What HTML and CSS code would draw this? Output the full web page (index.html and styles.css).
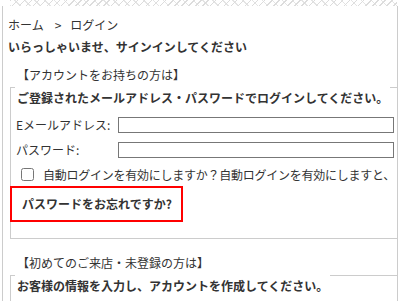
FILE: index.html
```html
<!DOCTYPE html>
<html lang="ja">
<head>
    <meta charset="UTF-8">
    <title>ログイン</title>
    <link rel="stylesheet" href="styles.css">
</head>
<body>
    <div class="top-band"></div>
    <div class="frame">
        <div class="breadcrumb">ホーム<span class="sep">&gt;</span>ログイン</div>
        <div class="welcome">いらっしゃいませ、サインインしてください</div>

        <!-- 会員ログイン -->
        <fieldset class="box box-login">
            <legend>
                <span class="legend-title">【アカウントをお持ちの方は】</span>
                <span class="legend-lead">ご登録されたメールアドレス・パスワードでログインしてください。</span>
            </legend>
            <div class="field-row">
                <label class="field-label">Eメールアドレス:</label>
                <input type="text" class="field-input">
            </div>
            <div class="field-row">
                <label class="field-label">パスワード:</label>
                <input type="password" class="field-input">
            </div>
            <div class="check-row">
                <input type="checkbox" class="check">
                <span class="check-text">自動ログインを有効にしますか？自動ログインを有効にしますと、</span>
            </div>
            <div class="forgot">パスワードをお忘れですか?</div>
        </fieldset>

        <!-- 新規登録 -->
        <fieldset class="box box-new">
            <legend>
                <span class="legend-title">【初めてのご来店・未登録の方は】</span>
                <span class="legend-lead">お客様の情報を入力し、アカウントを作成してください。</span>
            </legend>
            <div class="new-body"></div>
        </fieldset>
    </div>
</body>
</html>
```

FILE: styles.css
```css
body {
    margin: 0;
    font-family: "Noto Sans CJK JP", "Liberation Sans", sans-serif;
    font-size: 12px;
    color: #333;
    background: #fff;
}

.top-band {
    height: 6px;
    margin-left: 10px;
    width: 387px;
    background:
        repeating-linear-gradient(135deg, #dcdcdc 0 1px, transparent 1px 5px),
        repeating-linear-gradient(45deg, #e4e4e4 0 1px, transparent 1px 7px);
}

.frame {
    height: 295px;
    margin: 0 2px;
    padding-top: 8px;
    box-sizing: border-box;
    border-left: 1px solid #ccc;
    border-right: 1px solid #ccc;
    overflow: hidden;
}

.breadcrumb {
    padding-left: 5px;
    line-height: 22px;
}

.sep {
    margin: 0 9px 0 11px;
}

.welcome {
    padding-left: 5px;
    line-height: 22px;
    font-weight: bold;
}

.box {
    margin: 6px 0 0 7px;
    padding: 0 0 16px 4px;
    border: 1px solid #ccc;
    border-right: 0;
    min-width: 0;
}

.box legend {
    padding: 0 2px;
    background: #fff;
}

.legend-title {
    display: block;
    line-height: 22px;
}

.legend-lead {
    display: block;
    line-height: 24px;
    font-weight: bold;
}

.field-row {
    display: flex;
    align-items: center;
    height: 25px;
}

.field-row:first-of-type {
    margin-top: 2px;
}

.field-label {
    width: 102px;
    padding-left: 1px;
    line-height: 16px;
}

.field-input {
    width: 276px;
    height: 16px;
    box-sizing: border-box;
    margin: 0;
    padding: 0 2px;
    border: 1px solid #777;
    font: inherit;
}

.check-row {
    display: flex;
    align-items: center;
    height: 24px;
    white-space: nowrap;
}

.check {
    flex: none;
    width: 13px;
    height: 13px;
    margin: 1px 9px 0 6px;
}

.check-text {
    letter-spacing: -0.25px;
}

.forgot {
    width: 173px;
    height: 36px;
    box-sizing: border-box;
    margin-left: -5px;
    padding-left: 10px;
    border: 2px solid #f00;
    line-height: 32px;
    font-weight: bold;
}

.box-new {
    margin-top: 13px;
    padding-bottom: 0;
}

.new-body {
    margin: 4px 0 0 -4px;
    border-top: 1px solid #ccc;
    height: 10px;
}
```
